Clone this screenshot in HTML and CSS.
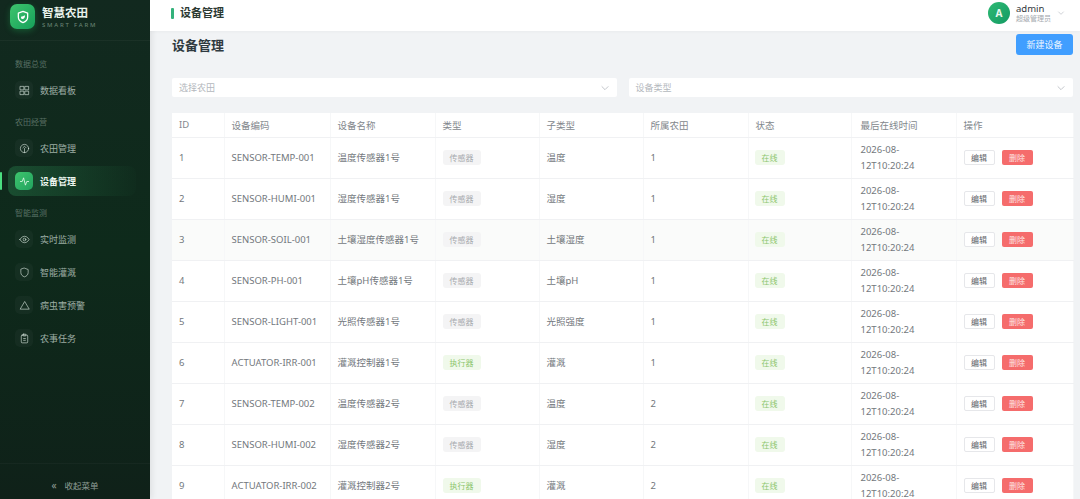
FILE: index.html
```html
<!DOCTYPE html>
<html lang="zh-CN">
<head>
  <meta charset="UTF-8">
  <meta name="viewport" content="width=device-width, initial-scale=1.0">
  <title>智慧农田 | 设备管理</title>
  <link rel="stylesheet" href="styles.css">
</head>
<body>
<div class="app">
  <aside class="sidebar">
    <div class="brand">
      <div class="brand-logo">
        <svg width="14" height="14" viewBox="0 0 24 24" fill="none" stroke="#fff" stroke-width="2.2" stroke-linecap="round" stroke-linejoin="round">
          <path d="M12 2.500l8 3v6.500c0 5-3.400 8-8 9.500-4.600-1.500-8-4.500-8-9.500V5.500z"/>
          <path d="M8.500 11.500c2.500 0 4.500-1 7-2.500 0 4-1.500 6.500-4.500 6.500-1.500 0-2.500-1.500-2.500-4z" fill="#fff" stroke="none"/>
        </svg>
      </div>
      <div>
        <div class="brand-name">智慧农田</div>
        <div class="brand-sub">SMART FARM</div>
      </div>
    </div>

    <nav class="menu">
      <div class="menu-label">数据总览</div>
      <a class="menu-item">
        <span class="menu-icon">
          <svg viewBox="0 0 24 24"><rect x="3" y="3" width="7.500" height="7.500"/><rect x="13.500" y="3" width="7.500" height="7.500"/><rect x="3" y="13.500" width="7.500" height="7.500"/><rect x="13.500" y="13.500" width="7.500" height="7.500"/></svg>
        </span>
        数据看板
      </a>

      <div class="menu-label label-next">农田经营</div>
      <a class="menu-item">
        <span class="menu-icon">
          <svg viewBox="0 0 24 24"><circle cx="12" cy="12" r="9"/><path d="M12 21v-9M8.500 10.500L12 7l3.500 3.500"/></svg>
        </span>
        农田管理
      </a>
      <a class="menu-item active">
        <span class="menu-icon">
          <svg viewBox="0 0 24 24"><path d="M3 12h4l3-8 4 16 3-8h4"/></svg>
        </span>
        设备管理
      </a>

      <div class="menu-label label-next">智能监测</div>
      <a class="menu-item">
        <span class="menu-icon">
          <svg viewBox="0 0 24 24"><path d="M2 12s3.500-7 10-7 10 7 10 7-3.500 7-10 7-10-7-10-7z"/><circle cx="12" cy="12" r="3"/></svg>
        </span>
        实时监测
      </a>
      <a class="menu-item">
        <span class="menu-icon">
          <svg viewBox="0 0 24 24"><path d="M12 2.500l8 3v6.500c0 5-3.400 8-8 9.500-4.600-1.500-8-4.500-8-9.500V5.500z"/></svg>
        </span>
        智能灌溉
      </a>
      <a class="menu-item">
        <span class="menu-icon">
          <svg viewBox="0 0 24 24"><path d="M12 4L2.500 20h19z"/></svg>
        </span>
        病虫害预警
      </a>
      <a class="menu-item">
        <span class="menu-icon">
          <svg viewBox="0 0 24 24"><rect x="5" y="4.500" width="14" height="17" rx="2"/><rect x="9" y="2.500" width="6" height="4" rx="1"/><path d="M10 12h4M10 16h4"/></svg>
        </span>
        农事任务
      </a>
    </nav>

    <div class="collapse"><span class="collapse-arrow">«</span>收起菜单</div>
  </aside>

  <div class="main">
    <header class="topbar">
      <div class="crumb">设备管理</div>
      <div class="user">
        <div class="avatar">A</div>
        <div>
          <div class="user-name">admin</div>
          <div class="user-role">超级管理员</div>
        </div>
        <svg class="chevron" width="8" height="8" viewBox="0 0 12 12"><path d="M2 4l4 4 4-4"/></svg>
      </div>
    </header>

    <div class="content">
      <div class="page-head">
        <h1 class="page-title">设备管理</h1>
        <button class="btn-primary">新建设备</button>
      </div>

      <div class="filters">
        <div class="select">选择农田<svg class="chevron" width="10" height="10" viewBox="0 0 12 12"><path d="M2 4l4 4 4-4"/></svg></div>
        <div class="select">设备类型<svg class="chevron" width="10" height="10" viewBox="0 0 12 12"><path d="M2 4l4 4 4-4"/></svg></div>
      </div>

      <table class="device-table">
        <colgroup>
          <col class="c-id"><col class="c-code"><col class="c-name"><col class="c-type"><col class="c-sub">
          <col class="c-farm"><col class="c-status"><col class="c-time"><col class="c-op">
        </colgroup>
        <thead>
          <tr><th>ID</th><th>设备编码</th><th>设备名称</th><th>类型</th><th>子类型</th><th>所属农田</th><th>状态</th><th>最后在线时间</th><th>操作</th></tr>
        </thead>
        <tbody>
          <tr>
            <td>1</td><td>SENSOR-TEMP-001</td><td>温度传感器1号</td><td><span class="tag">传感器</span></td><td>温度</td><td>1</td>
            <td><span class="tag tag-green">在线</span></td><td>2026-08-<br>12T10:20:24</td>
            <td><button class="btn-edit">编辑</button><button class="btn-del">删除</button></td>
          </tr>
          <tr>
            <td>2</td><td>SENSOR-HUMI-001</td><td>湿度传感器1号</td><td><span class="tag">传感器</span></td><td>湿度</td><td>1</td>
            <td><span class="tag tag-green">在线</span></td><td>2026-08-<br>12T10:20:24</td>
            <td><button class="btn-edit">编辑</button><button class="btn-del">删除</button></td>
          </tr>
          <tr class="row-hover">
            <td>3</td><td>SENSOR-SOIL-001</td><td>土壤湿度传感器1号</td><td><span class="tag">传感器</span></td><td>土壤湿度</td><td>1</td>
            <td><span class="tag tag-green">在线</span></td><td>2026-08-<br>12T10:20:24</td>
            <td><button class="btn-edit">编辑</button><button class="btn-del">删除</button></td>
          </tr>
          <tr>
            <td>4</td><td>SENSOR-PH-001</td><td>土壤pH传感器1号</td><td><span class="tag">传感器</span></td><td>土壤pH</td><td>1</td>
            <td><span class="tag tag-green">在线</span></td><td>2026-08-<br>12T10:20:24</td>
            <td><button class="btn-edit">编辑</button><button class="btn-del">删除</button></td>
          </tr>
          <tr>
            <td>5</td><td>SENSOR-LIGHT-001</td><td>光照传感器1号</td><td><span class="tag">传感器</span></td><td>光照强度</td><td>1</td>
            <td><span class="tag tag-green">在线</span></td><td>2026-08-<br>12T10:20:24</td>
            <td><button class="btn-edit">编辑</button><button class="btn-del">删除</button></td>
          </tr>
          <tr>
            <td>6</td><td>ACTUATOR-IRR-001</td><td>灌溉控制器1号</td><td><span class="tag tag-green">执行器</span></td><td>灌溉</td><td>1</td>
            <td><span class="tag tag-green">在线</span></td><td>2026-08-<br>12T10:20:24</td>
            <td><button class="btn-edit">编辑</button><button class="btn-del">删除</button></td>
          </tr>
          <tr>
            <td>7</td><td>SENSOR-TEMP-002</td><td>温度传感器2号</td><td><span class="tag">传感器</span></td><td>温度</td><td>2</td>
            <td><span class="tag tag-green">在线</span></td><td>2026-08-<br>12T10:20:24</td>
            <td><button class="btn-edit">编辑</button><button class="btn-del">删除</button></td>
          </tr>
          <tr>
            <td>8</td><td>SENSOR-HUMI-002</td><td>湿度传感器2号</td><td><span class="tag">传感器</span></td><td>湿度</td><td>2</td>
            <td><span class="tag tag-green">在线</span></td><td>2026-08-<br>12T10:20:24</td>
            <td><button class="btn-edit">编辑</button><button class="btn-del">删除</button></td>
          </tr>
          <tr>
            <td>9</td><td>ACTUATOR-IRR-002</td><td>灌溉控制器2号</td><td><span class="tag tag-green">执行器</span></td><td>灌溉</td><td>2</td>
            <td><span class="tag tag-green">在线</span></td><td>2026-08-<br>12T10:20:24</td>
            <td><button class="btn-edit">编辑</button><button class="btn-del">删除</button></td>
          </tr>
        </tbody>
      </table>
    </div>
  </div>
</div>
</body>
</html>
```

FILE: styles.css
```css
* {
  margin: 0;
  padding: 0;
  box-sizing: border-box;
  font-family: "Noto Sans", "Noto Sans CJK SC", sans-serif;
}

body {
  background: #f1f3f5;
  height: 100vh;
  overflow: hidden;
}

.app {
  display: flex;
  height: 100vh;
}

/* sidebar */
.sidebar {
  width: 150px;
  flex-shrink: 0;
  display: flex;
  flex-direction: column;
  background: linear-gradient(180deg, #12291f 0%, #0e2a1b 50%, #0f2119 100%);
  box-shadow: 2px 0 6px rgba(0, 0, 0, 0.08);
}

.brand {
  height: 41px;
  padding: 4px 0 0 10px;
  display: flex;
  align-items: flex-start;
  gap: 7px;
  border-bottom: 1px solid rgba(255, 255, 255, 0.04);
}

.brand-logo {
  width: 25px;
  height: 25px;
  border-radius: 7px;
  background: linear-gradient(135deg, #3ec46d, #16a05a);
  box-shadow: 0 2px 6px rgba(34, 197, 94, 0.3);
  display: flex;
  align-items: center;
  justify-content: center;
}

.brand-name {
  color: #e9f3ec;
  font-size: 11.500px;
  font-weight: 700;
  line-height: 16px;
  margin-top: 1px;
}

.brand-sub {
  color: rgba(200, 225, 210, 0.5);
  font-size: 6px;
  letter-spacing: 1.800px;
  line-height: 8px;
}

.menu {
  flex: 1;
  padding: 0 14px 0 8px;
}

.menu-label {
  color: rgba(220, 235, 225, 0.36);
  font-size: 8px;
  line-height: 12px;
  padding-left: 7px;
  margin-top: 17px;
  margin-bottom: 5px;
}

.label-next {
  margin-top: 11px;
}

.menu-item {
  height: 30px;
  display: flex;
  align-items: center;
  gap: 7px;
  padding-left: 7px;
  margin-bottom: 3px;
  color: rgba(225, 238, 230, 0.68);
  font-size: 9px;
  border-radius: 8px;
}

.menu-icon {
  width: 18px;
  height: 18px;
  border-radius: 5px;
  background: rgba(255, 255, 255, 0.03);
  display: flex;
  align-items: center;
  justify-content: center;
}

.menu-icon svg {
  width: 11px;
  height: 11px;
  fill: none;
  stroke: rgba(225, 238, 230, 0.72);
  stroke-width: 1.800;
  stroke-linecap: round;
  stroke-linejoin: round;
}

.menu-item.active {
  position: relative;
  color: #eef7f1;
  font-weight: 700;
  background: linear-gradient(90deg, rgba(50, 160, 95, 0.3), rgba(50, 160, 95, 0.02));
}

.menu-item.active::before {
  content: '';
  position: absolute;
  left: -8px;
  top: 6px;
  width: 2px;
  height: 18px;
  border-radius: 1px;
  background: #4ade80;
}

.menu-item.active .menu-icon {
  background: linear-gradient(135deg, #3ec46d, #22a35f);
}

.menu-item.active .menu-icon svg {
  stroke: #dff7e8;
}

.collapse {
  height: 36px;
  padding-top: 6px;
  display: flex;
  align-items: center;
  justify-content: center;
  gap: 8px;
  color: rgba(225, 238, 230, 0.6);
  font-size: 8.500px;
  border-top: 1px solid rgba(255, 255, 255, 0.03);
}

.collapse-arrow {
  font-size: 10px;
}

/* main */
.main {
  flex: 1;
  min-width: 0;
  display: flex;
  flex-direction: column;
  overflow: hidden;
}

.topbar {
  height: 31px;
  flex-shrink: 0;
  padding: 0 15px 5px 21px;
  background: #fff;
  display: flex;
  align-items: center;
  justify-content: space-between;
  box-shadow: 0 1px 3px rgba(0, 0, 0, 0.03);
}

.crumb {
  color: #2c3a33;
  font-size: 11px;
  font-weight: 700;
  line-height: 12px;
  padding-left: 9px;
  position: relative;
}

.crumb::before {
  content: '';
  position: absolute;
  left: 0;
  top: 1px;
  width: 3px;
  height: 11px;
  border-radius: 1px;
  background: #34b27b;
}

.user {
  display: flex;
  align-items: center;
  gap: 6px;
}

.avatar {
  width: 22px;
  height: 22px;
  border-radius: 50%;
  background: linear-gradient(135deg, #2fba74, #139a63);
  color: #e8f8ef;
  font-size: 10px;
  font-weight: 700;
  display: flex;
  align-items: center;
  justify-content: center;
}

.user-name {
  color: #33383d;
  font-size: 9.500px;
  line-height: 11px;
}

.user-role {
  color: #a5aaaf;
  font-size: 7px;
  line-height: 9px;
}

.chevron {
  fill: none;
  stroke: #b8bcc2;
  stroke-width: 1;
}

.content {
  padding: 3px 7px 0 22px;
}

.page-head {
  display: flex;
  justify-content: space-between;
  align-items: flex-start;
  margin-bottom: 22px;
}

.page-title {
  color: #2f3a40;
  font-size: 13px;
  font-weight: 700;
  line-height: 22px;
}

.btn-primary {
  width: 57px;
  height: 21px;
  border: none;
  border-radius: 3px;
  background: #409eff;
  color: #eef6ff;
  font-size: 9px;
}

.filters {
  display: flex;
  gap: 12px;
  margin-bottom: 16px;
}

.select {
  flex: 1;
  height: 19px;
  padding: 0 7px;
  background: #fff;
  color: #b4b8bd;
  font-size: 9px;
  border-radius: 2px;
  display: flex;
  align-items: center;
  justify-content: space-between;
}

/* table */
.device-table {
  width: 901px;
  table-layout: fixed;
  border-collapse: collapse;
  background: #fff;
  color: #73787d;
  font-size: 9.500px;
}

.c-id { width: 52px; }
.c-code { width: 106px; }
.c-name { width: 105px; }
.c-type { width: 104px; }
.c-sub { width: 104px; }
.c-farm { width: 105px; }
.c-status { width: 103px; }
.c-time { width: 105px; }
.c-op { width: 117px; }

.device-table th,
.device-table td {
  padding: 0 7px;
  text-align: left;
  border-bottom: 1px solid #f0f1f3;
  border-right: 1px solid #f6f7f8;
  white-space: nowrap;
}

.device-table th {
  height: 24px;
  font-weight: 400;
  color: #83888d;
}

.device-table td {
  height: 41px;
  line-height: 16px;
}

.device-table td:nth-child(7) {
  padding-left: 6px;
}

.device-table th:nth-child(8),
.device-table td:nth-child(8) {
  padding-left: 9px;
}

.row-hover td {
  background: #fafbfa;
}

.tag {
  display: inline-block;
  height: 15px;
  line-height: 15px;
  padding: 0 7px;
  border-radius: 3px;
  background: #f4f4f5;
  color: #a6a9ad;
  font-size: 8px;
  vertical-align: middle;
}

.tag-green {
  background: #f0f9eb;
  color: #8cc56c;
}

.btn-edit,
.btn-del {
  height: 15px;
  border-radius: 2px;
  font-size: 8px;
  vertical-align: middle;
}

.btn-edit {
  width: 31px;
  background: #fff;
  border: 1px solid #e6e7ea;
  color: #5f6368;
  margin-right: 7px;
}

.btn-del {
  width: 31px;
  background: #f56c6c;
  border: none;
  color: #fde4e4;
}
```
